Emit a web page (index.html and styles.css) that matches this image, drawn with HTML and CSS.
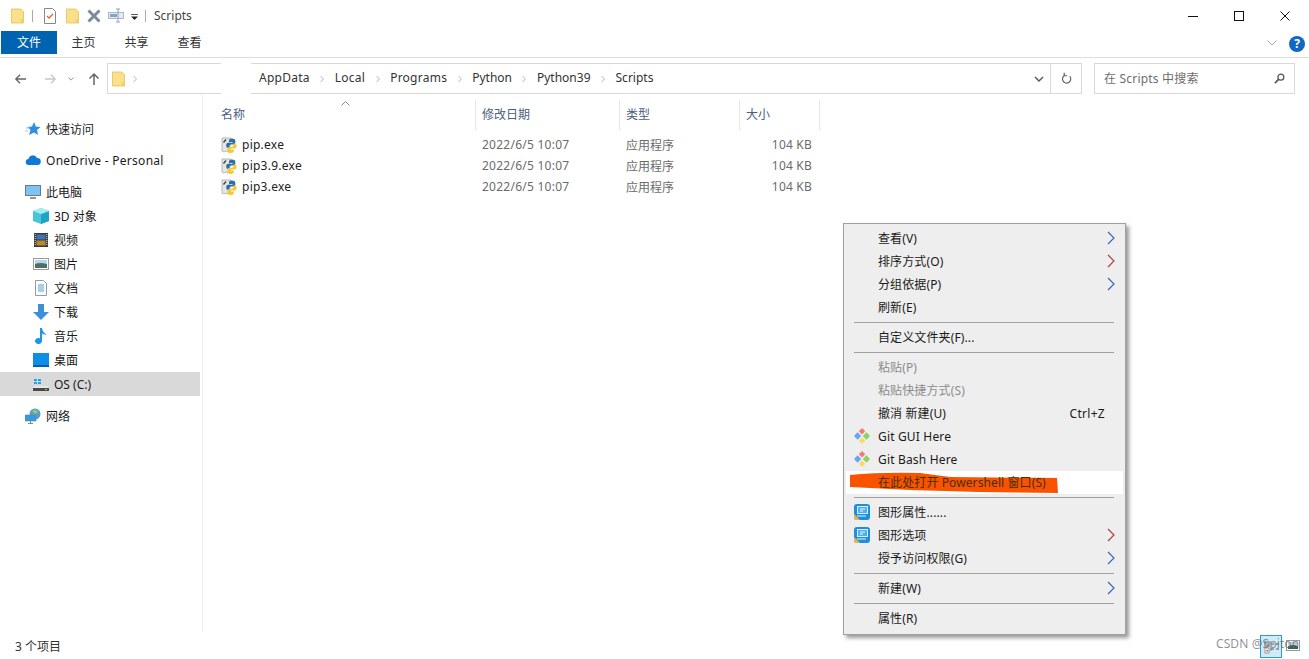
FILE: index.html
```html
<!DOCTYPE html>
<html lang="zh">
<head>
<meta charset="utf-8">
<title>Scripts</title>
<link rel="stylesheet" href="styles.css">
</head>
<body>
<svg class="defs" width="0" height="0">
  <defs>
    <symbol id="folder" viewBox="0 0 14 16"><path d="M.5.5h10l3 3v12H.5z" fill="#fbe08c" stroke="#e6c560"/><path d="M10.500 11.500h3v4h-3z" fill="#f3cf6b"/></symbol>
    <symbol id="py" viewBox="0 0 16 16">
      <path d="M1 1h9v2l-1 1v9l-2 2-2-1-2 1-2-1z" fill="#e6e6e6" stroke="#a8a8a8" stroke-width=".8"/>
      <path d="M2.500 5.500L5 2.500" stroke="#444" stroke-width="1.400"/>
      <path d="M11 1.500c-2 0-3 .8-3 2V5h3.500v.8H7c-1.200 0-1.800 1-1.800 2.500S5.800 11 7 11h1.500V9.200c0-1 .8-1.700 1.800-1.700h2.400c.9 0 1.600-.7 1.600-1.600V3.500c0-1.200-1.500-2-3.300-2z" fill="#2f6fa8"/>
      <path d="M11 1.500c-2 0-3 .8-3 2V5h3.500v.8H7c-1.200 0-1.800 1-1.800 2.500S5.800 11 7 11h1.500V9.200c0-1 .8-1.700 1.800-1.700h2.400c.9 0 1.600-.7 1.600-1.600V3.500c0-1.200-1.500-2-3.300-2z" fill="#f5c92f" transform="rotate(180 10.400 8.700)"/>
    </symbol>
    <symbol id="git" viewBox="0 0 16 16"><path d="M8 0l3.200 3.200L8 6.400 4.800 3.200z" fill="#f27a7a"/><path d="M12.500 4.300L16 8l-3.500 3.700L8.800 8z" fill="#90d060"/><path d="M3.500 4.300L7.200 8l-3.700 3.700L0 8z" fill="#6aa6f0"/><path d="M8 9.600l3.200 3.200L8 16l-3.200-3.200z" fill="#f6dc64"/></symbol>
    <symbol id="gfx" viewBox="0 0 16 16"><rect width="16" height="16" rx="3" fill="#1f8fdc"/><path d="M0 10l6 6H3q-3 0-3-3z" fill="#e8b93c"/><rect x="3.500" y="2.500" width="10" height="7" fill="#4fb0ea" stroke="#d7f0ff"/><path d="M3 12h9M6 5h5M6 7h3" stroke="#e6f6ff"/></symbol>
    <symbol id="chev" viewBox="0 0 8 14"><path d="M1 1l6 6-6 6" fill="none" stroke="currentColor" stroke-width="1.100"/></symbol>
  </defs>
</svg>

<div class="window">
  <header class="titlebar">
    <svg class="qa-folder"><use href="#folder"/></svg>
    <span class="qa-sep"></span>
    <svg class="qa-doc" viewBox="0 0 12 16"><path d="M.5.5h8l3 3v12H.5z" fill="#fff" stroke="#888"/><path d="M3 8l2 2 4-4" fill="none" stroke="#e2622c" stroke-width="1.300"/></svg>
    <svg class="qa-folder2"><use href="#folder"/></svg>
    <svg class="qa-x" viewBox="0 0 14 14"><path d="M1.500 1.500l11 11M12.500 1.500l-11 11" stroke="#7d8a9a" stroke-width="3"/></svg>
    <svg class="qa-rename" viewBox="0 0 16 14"><rect x=".5" y="4" width="15" height="6" fill="#e3eaf3" stroke="#a9b8cc"/><rect x="2" y="5.500" width="7" height="3" fill="#8ba2bf"/><path d="M10 .5v13M8 .5h4M8 13.500h4" stroke="#8ba2bf"/></svg>
    <svg class="qa-drop" viewBox="0 0 8 7"><path d="M0 0h8v1H0zM0 3h8L4 7z" fill="#222"/></svg>
    <span class="qa-sep qa-sep2"></span>
    <span class="title">Scripts</span>
    <div class="winbtns">
      <svg class="wb" viewBox="0 0 12 12"><path d="M1 6.500h10" stroke="#111"/></svg>
      <svg class="wb" viewBox="0 0 12 12"><rect x="1.500" y="1.500" width="9" height="9" fill="none" stroke="#111"/></svg>
      <svg class="wb" viewBox="0 0 12 12"><path d="M1.500 1.500l9 9M10.500 1.500l-9 9" stroke="#111"/></svg>
    </div>
  </header>

  <nav class="tabs">
    <span class="tab tab-file">文件</span>
    <span class="tab">主页</span>
    <span class="tab">共享</span>
    <span class="tab">查看</span>
    <svg class="ribbon-chev" viewBox="0 0 10 6"><path d="M.5.5L5 5 9.500.5" fill="none" stroke="#a9a9a9"/></svg>
    <span class="help">?</span>
  </nav>

  <div class="addressrow">
    <div class="navbtns">
      <svg class="nav-back" viewBox="0 0 14 12"><path d="M13 6H2M6.500 1.500L2 6l4.500 4.500" fill="none" stroke="#666" stroke-width="1.500"/></svg>
      <svg class="nav-fwd" viewBox="0 0 14 12"><path d="M1 6h11M7.500 1.500L12 6l-4.500 4.500" fill="none" stroke="#c8c8c8" stroke-width="1.500"/></svg>
      <svg class="nav-down" viewBox="0 0 8 5"><path d="M.5.500L4 4 7.500.500" fill="none" stroke="#8a8a8a" stroke-width="1.200"/></svg>
      <svg class="nav-up" viewBox="0 0 12 14"><path d="M6 13V2M1.500 6.500L6 2l4.500 4.500" fill="none" stroke="#666" stroke-width="1.500"/></svg>
    </div>
    <div class="address">
      <svg class="addr-folder"><use href="#folder"/></svg>
      <svg class="crumb-sep first"><use href="#chev"/></svg>
      <span class="addr-mask"></span>
      <span class="crumb crumb-first">AppData</span><svg class="crumb-sep"><use href="#chev"/></svg>
      <span class="crumb">Local</span><svg class="crumb-sep"><use href="#chev"/></svg>
      <span class="crumb">Programs</span><svg class="crumb-sep"><use href="#chev"/></svg>
      <span class="crumb crumb-tight">Python</span><svg class="crumb-sep"><use href="#chev"/></svg>
      <span class="crumb crumb-tight">Python39</span><svg class="crumb-sep"><use href="#chev"/></svg>
      <span class="crumb crumb-tight">Scripts</span>
      <svg class="addr-drop" viewBox="0 0 10 6"><path d="M1 1l4 4 4-4" fill="none" stroke="#555" stroke-width="1.400"/></svg>
      <span class="addr-refresh">
        <svg viewBox="0 0 12 14"><path d="M9.500 4.500a4.500 4.500 0 1 1-5-1.200M3.500 .8v3.200h3.200" fill="none" stroke="#666" stroke-width="1.300"/></svg>
      </span>
    </div>
    <div class="search">
      <span class="search-label">在 Scripts 中搜索</span>
      <svg viewBox="0 0 12 12"><circle cx="7.500" cy="4.500" r="3.200" fill="none" stroke="#555" stroke-width="1.400"/><path d="M5 7l-4 4" stroke="#555" stroke-width="1.800"/></svg>
    </div>
  </div>

  <div class="main">
    <aside class="sidebar">
      <div class="side-item lvl0 first-group">
        <svg class="side-ico" viewBox="0 0 16 16"><path d="M9 1l1.800 4.500L15.500 6 12 9l1 5-4-2.500L4 14l1.500-5L2 6l5-.5z" fill="#2f8ee0"/><path d="M1 7h4M0 10h3" stroke="#a9c9ea"/></svg>
        <span>快速访问</span>
      </div>
      <div class="side-item lvl0 group">
        <svg class="side-ico" viewBox="0 0 16 16"><path d="M4 13a3 3 0 0 1-.5-6A4.500 4.500 0 0 1 12 6a3.500 3.500 0 0 1 .5 7z" fill="#0f78d4"/></svg>
        <span class="latin">OneDrive - Personal</span>
      </div>
      <div class="side-item lvl0 group">
        <svg class="side-ico" viewBox="0 0 16 16"><rect x=".5" y="1.500" width="15" height="10" fill="#7cc5f2" stroke="#6a7a8c"/><path d="M5 14h6" stroke="#8a97a6" stroke-width="2"/></svg>
        <span>此电脑</span>
      </div>
      <div class="side-item lvl1">
        <svg class="side-ico" viewBox="0 0 16 16"><path d="M8 0l8 3v10l-8 3-8-3V3z" fill="#47c6d8"/><path d="M8 6l8-3v10l-8 3z" fill="#1fa5c4"/><path d="M8 0l8 3-8 3-8-3z" fill="#a4ecf2"/></svg>
        <span>3D 对象</span>
      </div>
      <div class="side-item lvl1">
        <svg class="side-ico" viewBox="0 0 16 16"><rect x="1" y="1" width="14" height="14" fill="#3a3a3a"/><rect x="3.500" y="2.500" width="9" height="5" fill="#3f74b5"/><rect x="3.500" y="8.500" width="9" height="5" fill="#b88a2c"/><path d="M2.200 2v12M13.800 2v12" stroke="#ddd" stroke-dasharray="1 1"/></svg>
        <span>视频</span>
      </div>
      <div class="side-item lvl1">
        <svg class="side-ico" viewBox="0 0 16 16"><rect x=".5" y="2.500" width="15" height="11" fill="#fff" stroke="#9a9a9a"/><rect x="2" y="4" width="12" height="4" fill="#b6d5ea"/><path d="M2 8q5-2 12 0v4H2z" fill="#4e6f68"/></svg>
        <span>图片</span>
      </div>
      <div class="side-item lvl1">
        <svg class="side-ico" viewBox="0 0 16 16"><path d="M2.500.5h8l3 3v12h-11z" fill="#fff" stroke="#999"/><path d="M5 5h6M5 7h6M5 9h6M5 11h6" stroke="#4b9fdc"/></svg>
        <span>文档</span>
      </div>
      <div class="side-item lvl1">
        <svg class="side-ico" viewBox="0 0 16 16"><path d="M5 0h6v8h5l-8 8-8-8h5z" fill="#3d8fdc"/></svg>
        <span>下载</span>
      </div>
      <div class="side-item lvl1">
        <svg class="side-ico" viewBox="0 0 16 16"><path d="M7 0h2q.5 4 4.500 6.500-2 .5-4.500-1V13a3.500 3 0 1 1-2-2.700z" fill="#1d95e8"/></svg>
        <span>音乐</span>
      </div>
      <div class="side-item lvl1">
        <svg class="side-ico" viewBox="0 0 16 16"><rect y="1" width="16" height="12" fill="#0f8ee8"/><rect y="13" width="16" height="2" fill="#0a5fa8"/></svg>
        <span>桌面</span>
      </div>
      <div class="side-item lvl1 selected">
        <svg class="side-ico" viewBox="0 0 16 16"><path d="M1 3h3v2H1zM5 3h3v2H5zM1 6h3v2H1zM5 6h3v2H5z" fill="#17a4ea"/><path d="M2 10h12l2 2v3H0v-3z" fill="#e8e8e8"/><rect y="12" width="16" height="3" fill="#4a4a4a"/><rect x="12" y="13" width="2" height="1" fill="#63e05a"/></svg>
        <span>OS (C:)</span>
      </div>
      <div class="side-item lvl0 group-last">
        <svg class="side-ico" viewBox="0 0 16 16"><circle cx="10" cy="6" r="5.500" fill="#5b9bd0"/><path d="M7 3q3-2 6 0-1 3-3 3z" fill="#8ccc6c"/><rect y="7" width="11" height="6" fill="#2f9ce0" stroke="#6a8aa6" stroke-width=".7"/><path d="M5.500 13v2M3 15.500h5" stroke="#7a8a9a"/></svg>
        <span>网络</span>
      </div>
    </aside>

    <section class="files">
      <svg class="sort-arrow" viewBox="0 0 9 5"><path d="M.5 4.500L4.500.5l4 4" fill="none" stroke="#888"/></svg>
      <div class="cols">
        <span class="col col-name">名称</span>
        <span class="col col-date">修改日期</span>
        <span class="col col-type">类型</span>
        <span class="col col-size">大小</span>
      </div>
      <div class="rows">
        <div class="row">
          <span class="cell cell-name"><svg class="py"><use href="#py"/></svg>pip.exe</span>
          <span class="cell cell-date">2022/6/5 10:07</span>
          <span class="cell cell-type">应用程序</span>
          <span class="cell cell-size">104 KB</span>
        </div>
        <div class="row">
          <span class="cell cell-name"><svg class="py"><use href="#py"/></svg>pip3.9.exe</span>
          <span class="cell cell-date">2022/6/5 10:07</span>
          <span class="cell cell-type">应用程序</span>
          <span class="cell cell-size">104 KB</span>
        </div>
        <div class="row">
          <span class="cell cell-name"><svg class="py"><use href="#py"/></svg>pip3.exe</span>
          <span class="cell cell-date">2022/6/5 10:07</span>
          <span class="cell cell-type">应用程序</span>
          <span class="cell cell-size">104 KB</span>
        </div>
      </div>
    </section>
  </div>

  <footer class="status">3 个项目</footer>
</div>

<div class="menu">
  <div class="mi"><span>查看(V)</span><svg class="arrow"><use href="#chev"/></svg></div>
  <div class="mi"><span>排序方式(O)</span><svg class="arrow red"><use href="#chev"/></svg></div>
  <div class="mi"><span>分组依据(P)</span><svg class="arrow"><use href="#chev"/></svg></div>
  <div class="mi"><span>刷新(E)</span></div>
  <div class="msep"></div>
  <div class="mi"><span>自定义文件夹(F)...</span></div>
  <div class="msep"></div>
  <div class="mi off"><span>粘贴(P)</span></div>
  <div class="mi off"><span>粘贴快捷方式(S)</span></div>
  <div class="mi"><span>撤消 新建(U)</span><span class="shortcut">Ctrl+Z</span></div>
  <div class="mi mi-git"><svg class="mico"><use href="#git"/></svg><span>Git GUI Here</span></div>
  <div class="mi mi-git"><svg class="mico"><use href="#git"/></svg><span>Git Bash Here</span></div>
  <div class="mi hot">
    <svg class="scribble" viewBox="0 0 208 22" preserveAspectRatio="none"><path d="M0 3Q30 0 70 1L100 5 207 6 208 21 130 20 60 18 0 15z" fill="#f95300"/></svg>
    <span class="hot-label">在此处打开 Powershell 窗口(S)</span>
  </div>
  <div class="msep"></div>
  <div class="mi"><svg class="mico"><use href="#gfx"/></svg><span>图形属性......</span></div>
  <div class="mi"><svg class="mico"><use href="#gfx"/></svg><span>图形选项</span><svg class="arrow red"><use href="#chev"/></svg></div>
  <div class="mi"><span>授予访问权限(G)</span><svg class="arrow"><use href="#chev"/></svg></div>
  <div class="msep"></div>
  <div class="mi"><span>新建(W)</span><svg class="arrow"><use href="#chev"/></svg></div>
  <div class="msep"></div>
  <div class="mi"><span>属性(R)</span></div>
</div>

<div class="tray-sel">
  <svg viewBox="0 0 20 20"><rect x="4" y="6" width="4" height="4" fill="none" stroke="#666"/><path d="M10 8h3M15 8h3M10 13h3M15 13h3" stroke="#555"/><rect x="4" y="12" width="4" height="5" fill="#fff" stroke="#999"/><rect x="5.500" y="14" width="1.500" height="1.500" fill="#d33"/></svg>
</div>
<svg class="tray-pic" viewBox="0 0 14 11"><rect x=".5" y=".5" width="13" height="10" fill="#fff" stroke="#999"/><rect x="2" y="2" width="10" height="3" fill="#b6d5ea"/><path d="M2 6q5-2 10 0v3H2z" fill="#3e5f58"/></svg>
<div class="watermark">CSDN @Spiton</div>
</body>
</html>
```

FILE: styles.css
```css
* { box-sizing: border-box; }
html, body { margin: 0; height: 100%; }
body {
  background: #fff;
  color: #1a1a1a;
  font-family: "Noto Sans", "Noto Sans CJK SC", sans-serif;
  font-size: 12px;
  overflow: hidden;
}
.defs { position: absolute; }
.window { display: flex; flex-direction: column; height: 659px; }
.latin { letter-spacing: .27px; }

/* Title bar */
.titlebar { display: flex; align-items: center; height: 31px; flex: none; padding-left: 11px; }
.qa-folder, .qa-folder2 { width: 13px; height: 16px; }
.qa-sep { width: 1px; height: 12px; background: #aaa; margin: 0 11px 0 8px; }
.qa-doc { width: 12px; height: 16px; margin-right: 10px; }
.qa-folder2 { margin-right: 8px; }
.qa-x { width: 14px; height: 14px; margin-right: 7px; }
.qa-rename { width: 16px; height: 15px; margin-right: 7px; }
.qa-drop { width: 7px; height: 6px; margin-top: 2px; }
.qa-sep2 { margin: 0 8px 0 7px; }
.title { color: #444; font-size: 12px; }
.winbtns { margin-left: auto; display: flex; padding-right: 1px; }
.wb { width: 12px; height: 12px; margin: 0 17px; }

/* Tabs */
.tabs { display: flex; align-items: center; height: 27px; flex: none; padding-left: 1px; border-bottom: 1px solid #dcdcdc; padding-bottom: 3px; }
.tab { width: 53px; height: 23px; line-height: 23px; text-align: center; color: #333; }
.tab-file { width: 56px; background: #0063b1; color: #fff; }
.ribbon-chev { width: 10px; height: 6px; margin-left: auto; margin-right: 12px; }
.help { width: 16px; height: 16px; border-radius: 50%; background: #1167c4; color: #fff; font-size: 12px; font-weight: 700; line-height: 16px; text-align: center; margin: 3px 4px 0 0; }

/* Address row */
.addressrow { display: flex; align-items: center; height: 36px; flex: none; padding-top: 5px; }
.navbtns { width: 107px; height: 31px; display: flex; align-items: center; padding-left: 14px; }
.nav-back, .nav-fwd { width: 13px; height: 12px; }
.nav-fwd { margin-left: 17px; }
.nav-down { width: 6px; height: 4px; margin-left: 11px; }
.nav-up { width: 12px; height: 14px; margin-left: 14px; }
.address { position: relative; width: 975px; height: 31px; border: 1px solid #d9d9d9; display: flex; align-items: center; padding-left: 4px; }
.addr-folder { width: 13px; height: 16px; margin-right: 8px; }
.crumb-sep { width: 4px; height: 8px; color: #777; margin: 0 10.500px; flex: none; }
.crumb-sep.first { margin: 0; }
.addr-mask { position: absolute; left: 113px; top: -2px; width: 30px; height: 34px; background: #fff; }
.crumb { color: #333; letter-spacing: .25px; position: relative; padding-bottom: 2px; }
.crumb-first { margin-left: 122px; }
.crumb-tight { letter-spacing: 0; }
.addr-drop { width: 10px; height: 6px; margin-left: auto; margin-right: 6px; }
.addr-refresh { width: 31px; height: 29px; border-left: 1px solid #d9d9d9; display: flex; align-items: center; justify-content: center; }
.addr-refresh svg { width: 11px; height: 13px; }
.search { width: 201px; height: 31px; margin-left: 12px; border: 1px solid #d9d9d9; display: flex; align-items: center; justify-content: space-between; padding: 0 9px; color: #6d6d6d; letter-spacing: .2px; }
.search-label { padding-bottom: 2px; }
.search svg { width: 11px; height: 11px; }

/* Main */
.main { flex: 1; display: flex; min-height: 0; }
.sidebar { width: 203px; flex: none; border-right: 1px solid #f0f0f0; padding-top: 23px; }
.side-item { display: flex; align-items: center; height: 24px; width: 200px; }
.lvl0 { padding-left: 25px; }
.lvl1 { padding-left: 33px; }
.first-group { margin-bottom: 7px; }
.group + .group { margin-top: 8px; }
.group-last { margin-top: 8px; }
.side-ico { width: 16px; height: 16px; margin-right: 5px; flex: none; }
.selected { background: #d9d9d9; }

.files { position: relative; flex: 1; padding-top: 6px; }
.sort-arrow { position: absolute; left: 138px; top: 7px; width: 9px; height: 5px; }
.cols { display: flex; height: 30px; width: 618px; align-items: center; color: #4c607a; }
.col { height: 100%; display: flex; align-items: center; border-right: 1px solid #e5e5e5; padding: 0 0 2px 6px; }
.col-name { width: 273px; padding-left: 18px; }
.col-date { width: 144px; }
.col-type { width: 120px; }
.col-size { width: 80px; }
.rows { padding-top: 4px; }
.row { display: flex; height: 21px; align-items: center; width: 617px; color: #6b6b6b; }
.cell { display: flex; align-items: center; }
.cell-name { width: 273px; padding-left: 18px; color: #222; letter-spacing: .25px; }
.py { width: 16px; height: 16px; margin-right: 5px; }
.cell-date { width: 144px; padding-left: 6px; letter-spacing: .25px; }
.cell-type { width: 120px; padding-left: 6px; }
.cell-size { width: 72px; justify-content: flex-end; letter-spacing: .2px; }

.status { flex: none; height: 27px; padding-left: 15px; line-height: 30px; color: #333; }

/* Context menu */
.menu {
  position: absolute; left: 843px; top: 223px; width: 283px; height: 412px;
  background: #eeeeee; border: 1px solid #a0a0a0; padding: 3px 2px;
  box-shadow: 3px 3px 4px rgba(0, 0, 0, .4);
}
.mi { position: relative; display: flex; align-items: center; height: 23px; padding: 0 0 2px 32px; color: #1a1a1a; letter-spacing: .12px; }
.mi.off { color: #8c8c8c; }
.mi-git { padding-bottom: 0; letter-spacing: .17px; }
.msep { height: 1px; background: #a0a0a0; margin: 3px 9px 3px 8px; }
.arrow { position: absolute; right: 8px; top: 4px; width: 8px; height: 14px; color: #2a63b8; }
.arrow.red { color: #a83a3a; }
.shortcut { position: absolute; right: 18px; margin-top: 2px; letter-spacing: .3px; }
.mico { position: absolute; left: 8px; top: 3px; width: 16px; height: 16px; }
.hot { background: #fff; color: #463000; }
.scribble { position: absolute; left: 4px; top: 1px; width: 208px; height: 22px; }
.hot-label { position: relative; letter-spacing: .1px; }

/* Watermark and tray fragment */
.watermark { position: absolute; left: 1216px; top: 635px; color: rgba(110, 110, 110, .75); font-size: 12px; letter-spacing: .1px; }
.tray-sel { position: absolute; left: 1260px; top: 635px; width: 22px; height: 23px; background: rgba(190, 228, 247, .75); border: 1px solid #2b9ad6; }
.tray-sel svg { width: 20px; height: 20px; display: block; }
.tray-pic { position: absolute; left: 1286px; top: 640px; width: 14px; height: 11px; }
```
